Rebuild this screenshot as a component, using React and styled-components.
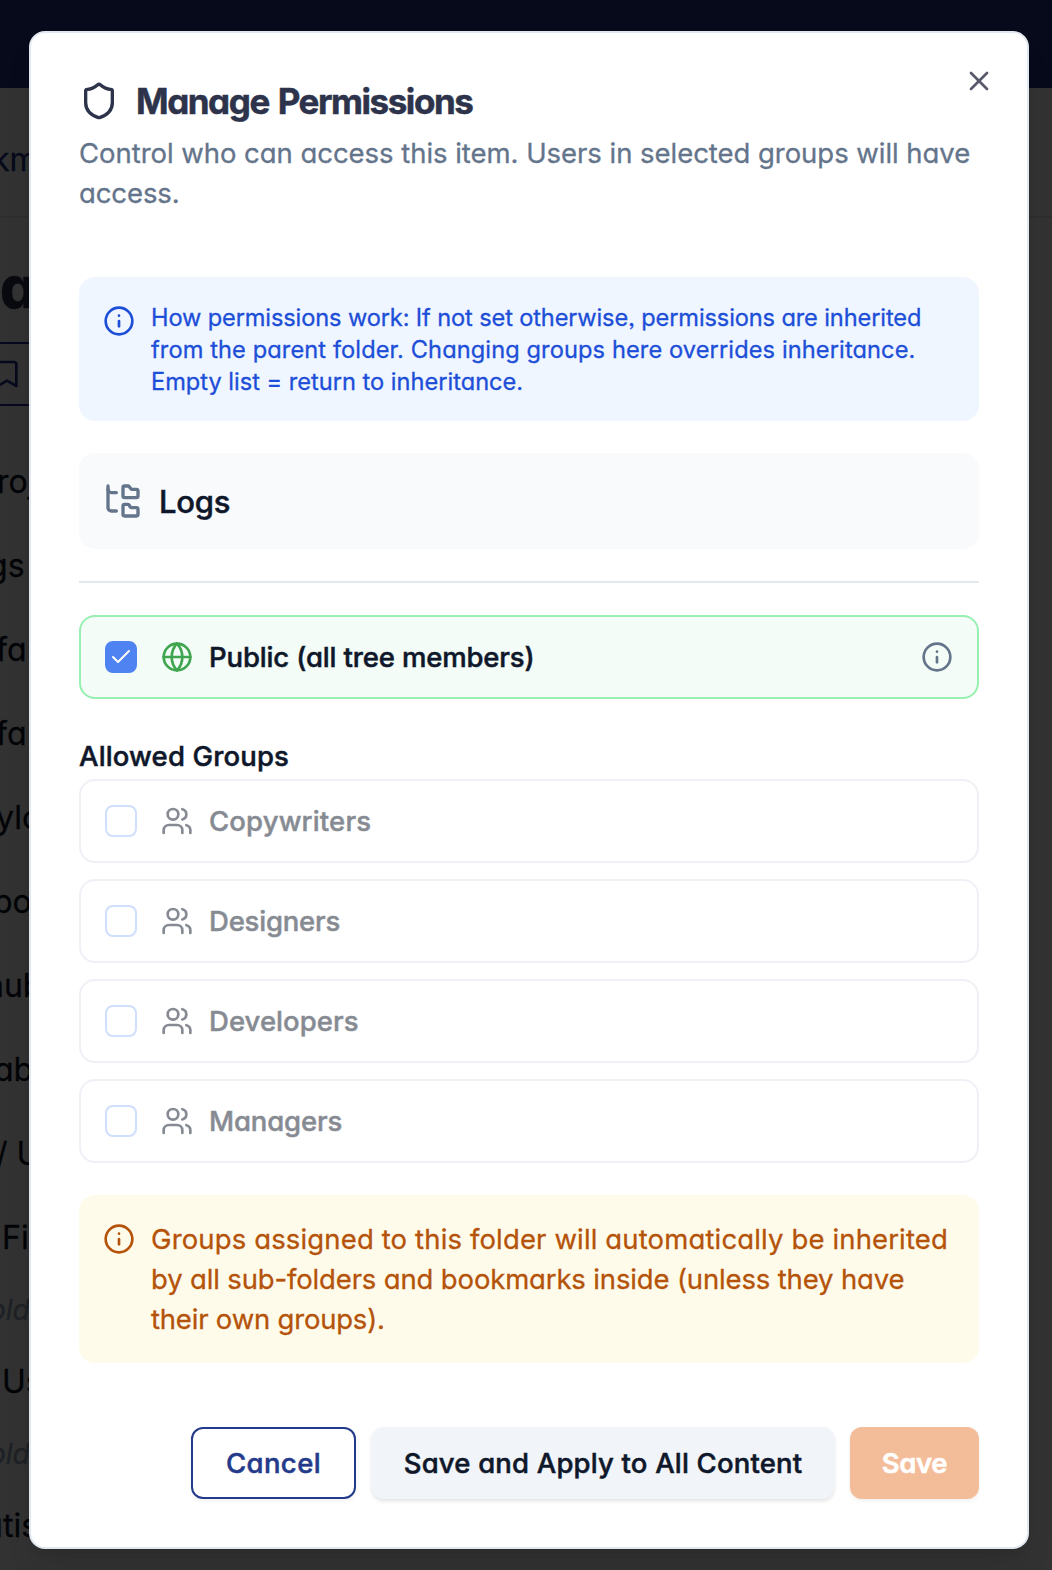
import styled, { createGlobalStyle } from 'styled-components';
import { Bookmark, Check, FolderTree, Globe, Info, Shield, Users, X } from 'lucide-react'

const GlobalStyle = createGlobalStyle`
  * {
    box-sizing: border-box;
  }
  body {
    margin: 0;
    font-family: Inter, "Liberation Sans", sans-serif;
    font-feature-settings: "cv11", "ss03";
    -webkit-text-stroke: 0.3px;
    color: #0f172a;
  }
  svg {
    display: block;
    flex-shrink: 0;
  }
`

const Page = styled.div`
  position: relative;
  height: 1570px;
  overflow: hidden;
  background-color: #fbfbfb;
`

const TopBar = styled.div`
  height: 88px;
  background-color: #1e3282;
`

const NavBar = styled.div`
  height: 130px;
  padding-top: 50px;
  border-bottom: 2px solid #e5e7eb;
  color: #1e3282;
  font-size: 32px;
  line-height: 44px;
`

const Cut = styled.span`
  display: block;
  white-space: pre;
  margin-left: ${({ $shift }) => $shift}px;
`

const PageTitle = styled.div`
  height: 124px;
  padding-top: 34px;
  color: #2d334a;
  font-size: 57px;
  font-weight: 800;
  line-height: 72px;
`

const FilterBar = styled.div`
  width: 200px;
  height: 64px;
  margin-left: -20px;
  padding-left: 9px;
  display: flex;
  align-items: center;
  border: 2px solid #1e2a8a;
  color: #1e2a8a;
`

const TreeList = styled.div`
  padding-top: 34px;
`

const TreeItem = styled.div`
  height: ${({ $note }) => $note ? '60px' : '84px'};
  line-height: ${({ $note }) => $note ? '60px' : '84px'};
  font-size: ${({ $note }) => $note ? '28px' : '32px'};
  font-style: ${({ $note }) => $note ? 'italic' : 'normal'};
  color: ${({ $note }) => $note ? '#94a3b8' : '#0f172a'};
`

const Overlay = styled.div`
  position: absolute;
  inset: 0;
  padding: 31px 23px 21px 29px;
  background-color: rgba(0, 0, 0, 0.8);
`

const Dialog = styled.div`
  position: relative;
  display: flex;
  flex-direction: column;
  padding: 48px;
  border: 2px solid #e2e8f0;
  border-radius: 16px;
  background-color: #fff;
  box-shadow: 0 20px 30px -6px rgba(0, 0, 0, 0.1), 0 8px 12px -8px rgba(0, 0, 0, 0.1);
`

const CloseButton = styled.button`
  position: absolute;
  top: 32px;
  right: 32px;
  padding: 0;
  border: 0;
  background: none;
  color: #57596b;
`

const DialogHead = styled.div`
  display: flex;
  flex-direction: column;
  gap: 12px;
  margin-bottom: 64px;
`

const Title = styled.div`
  display: flex;
  align-items: center;
  gap: 17px;
  height: 40px;
  color: #2d334a;
  font-size: 35px;
  font-weight: 700;
  letter-spacing: -1.45px;
  word-spacing: 2px;
  -webkit-text-stroke: 0.5px;
`

const Line = styled.span`
  display: block;
  white-space: nowrap;
  letter-spacing: ${({ $track }) => $track || 0}px;
`

const Description = styled.div`
  color: #64748b;
  font-size: 27.5px;
  line-height: 40px;
`

const Notice = styled.div`
  display: flex;
  gap: 16px;
  padding: 24px;
  border-radius: 16px;
  background-color: ${({ $tone }) => $tone === 'warning' ? '#fffbeb' : '#eff6ff'};
  color: ${({ $tone }) => $tone === 'warning' ? '#b45309' : '#1d4ed8'};
  font-size: ${({ $tone }) => $tone === 'warning' ? '27.5px' : '23.6px'};
  line-height: ${({ $tone }) => $tone === 'warning' ? '40px' : '32px'};
  & > svg {
    margin-top: 4px;
  }
  & > div {
    margin: ${({ $tone }) => $tone === 'warning' ? '0' : '1px 0 -1px'};
  }
`

const FolderCard = styled.div`
  display: flex;
  align-items: center;
  gap: 16px;
  height: 96px;
  margin-top: 32px;
  padding: 24px;
  border-radius: 16px;
  background-color: #f8fafc;
  font-size: 31px;
  font-weight: 500;
  letter-spacing: -0.2px;
  -webkit-text-stroke: 0.5px;
  & > svg {
    color: #64748b;
  }
`

const Divider = styled.div`
  height: 2px;
  margin: 32px 0;
  background-color: #e2e8f0;
`

const AccessRow = styled.div`
  display: flex;
  align-items: center;
  height: 84px;
  padding: 0 24px;
  border: 2px solid ${({ $active }) => $active ? '#97f0b1' : '#e2e2ee'};
  border-radius: 16px;
  background-color: ${({ $active }) => $active ? '#f3fcf6' : '#fff'};
  opacity: ${({ $active }) => $active ? 1 : 0.5};
  font-size: 27.5px;
  font-weight: 500;
  -webkit-text-stroke: 0.5px;
`

const CheckBox = styled.span`
  display: flex;
  align-items: center;
  justify-content: center;
  width: 32px;
  height: 32px;
  margin-right: 24px;
  border: 2px solid ${({ $checked }) => $checked ? '#4f83f1' : '#a3c0fb'};
  border-radius: 8px;
  background-color: ${({ $checked }) => $checked ? '#4f83f1' : '#fff'};
  color: #fff;
`

const RowLabel = styled.span`
  flex: 1;
  margin-left: 16px;
  letter-spacing: ${({ $track }) => $track || 0}px;
`

const SectionLabel = styled.div`
  height: 48px;
  margin-top: 32px;
  padding-top: 1px;
  font-size: 27.5px;
  font-weight: 500;
  line-height: 48px;
  letter-spacing: 0.15px;
  -webkit-text-stroke: 0.5px;
`

const GroupList = styled.div`
  display: flex;
  flex-direction: column;
  gap: 16px;
  margin-bottom: 32px;
`

const Footer = styled.div`
  display: flex;
  justify-content: flex-end;
  gap: 16px;
  margin-top: 64px;
`

const Button = styled.button`
  width: ${({ $width }) => $width}px;
  height: 72px;
  padding: 0;
  border: ${({ $kind }) => $kind === 'outline' ? '2px solid #243a8a' : '0'};
  border-radius: 12px;
  background-color: ${({ $kind }) => $kind === 'primary' ? '#f4bd9a' : $kind === 'outline' ? '#fff' : '#f1f5f9'};
  color: ${({ $kind }) => $kind === 'primary' ? '#fff' : $kind === 'outline' ? '#243a8a' : '#0f172a'};
  box-shadow: 0 2px 4px rgba(0, 0, 0, ${({ $kind }) => $kind === 'secondary' ? 0.12 : 0.06});
  font-family: inherit;
  font-feature-settings: inherit;
  font-size: 27.5px;
  font-weight: ${({ $kind }) => $kind === 'primary' ? 600 : 500};
  letter-spacing: ${({ $track }) => $track || 0}px;
  white-space: nowrap;
  -webkit-text-stroke: 0.5px;
`

const treeItems = [
  { text: 'roj', shift: -3 },
  { text: 'gs', shift: -12 },
  { text: 'fa', shift: -4 },
  { text: 'fa', shift: -4 },
  { text: 'ylo', shift: -4 },
  { text: 'po', shift: -7 },
  { text: 'hub', shift: -15 },
  { text: 'ab', shift: -6 },
  { text: '/ U', shift: -4 },
  { text: 'Fig', shift: 2 },
  { text: 'old', shift: -11, note: true },
  { text: 'Us', shift: 2 },
  { text: 'old', shift: -11, note: true },
  { text: 'utis', shift: -16 },
]

const groups = [
  { name: 'Copywriters', track: 0.15 },
  { name: 'Designers', track: -0.2 },
  { name: 'Developers', track: 0.05 },
  { name: 'Managers', track: -0.15 },
]

const App = () => {
  return (
    <Page>
      <GlobalStyle />
      <TopBar />
      <NavBar><Cut $shift={-8}>km</Cut></NavBar>
      <PageTitle><Cut $shift={0}>a</Cut></PageTitle>
      <FilterBar><Bookmark size={32} /></FilterBar>
      <TreeList>
        {treeItems.map(({ text, shift, note }, i) => (
          <TreeItem key={`item_${i}`} $note={note}><Cut $shift={shift}>{text}</Cut></TreeItem>
        ))}
      </TreeList>
      <Overlay>
        <Dialog role="dialog">
          <CloseButton aria-label="Close"><X size={32} /></CloseButton>
          <DialogHead>
            <Title><Shield size={40} /><span>Manage Permissions</span></Title>
            <Description>
              <Line $track={-0.04}>Control who can access this item. Users in selected groups will have</Line>
              <Line $track={-0.1}>access.</Line>
            </Description>
          </DialogHead>
          <Notice>
            <Info size={32} />
            <div>
              <Line $track={-0.12}>How permissions work: If not set otherwise, permissions are inherited</Line>
              <Line $track={0.11}>from the parent folder. Changing groups here overrides inheritance.</Line>
              <Line>Empty list = return to inheritance.</Line>
            </div>
          </Notice>
          <FolderCard><FolderTree size={40} /><span>Logs</span></FolderCard>
          <Divider />
          <AccessRow $active>
            <CheckBox $checked><Check size={24} /></CheckBox>
            <Globe size={32} color="#3fa64f" />
            <RowLabel $track={-0.15}>Public (all tree members)</RowLabel>
            <Info size={32} color="#64748b" />
          </AccessRow>
          <SectionLabel>Allowed Groups</SectionLabel>
          <GroupList>
            {groups.map(({ name, track }) => (
              <AccessRow key={name}>
                <CheckBox />
                <Users size={32} />
                <RowLabel $track={track}>{name}</RowLabel>
              </AccessRow>
            ))}
          </GroupList>
          <Notice $tone="warning">
            <Info size={32} />
            <div>
              <Line $track={0.14}>Groups assigned to this folder will automatically be inherited</Line>
              <Line $track={-0.15}>by all sub-folders and bookmarks inside (unless they have</Line>
              <Line $track={-0.2}>their own groups).</Line>
            </div>
          </Notice>
          <Footer>
            <Button $kind="outline" $width={165} $track={0.4}>Cancel</Button>
            <Button $kind="secondary" $width={462} $track={0.18}>Save and Apply to All Content</Button>
            <Button $kind="primary" $width={129} $track={-0.4}>Save</Button>
          </Footer>
        </Dialog>
      </Overlay>
    </Page>
  )
}

export default App
